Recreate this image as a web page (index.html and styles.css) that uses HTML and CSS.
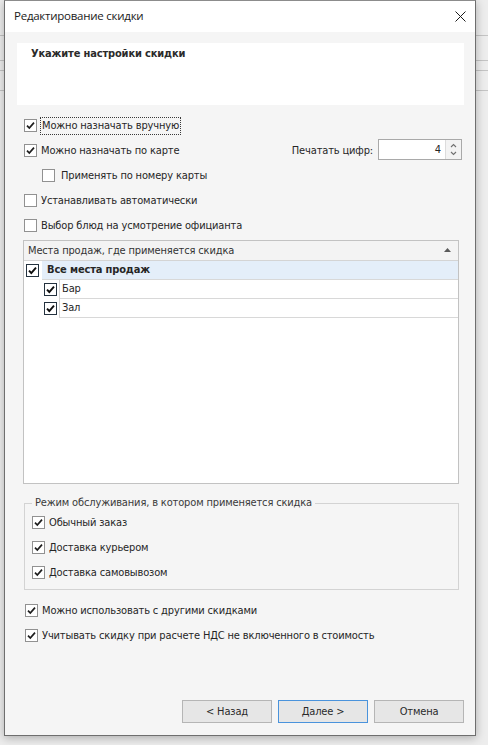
FILE: index.html
```html
<!DOCTYPE html>
<html lang="ru">
<head>
<meta charset="utf-8">
<title>Редактирование скидки</title>
<link rel="stylesheet" href="styles.css">
</head>
<body>
<div class="window">
  <div class="titlebar">
    <span class="title">Редактирование скидки</span>
    <svg class="close" viewBox="0 0 11 11" width="11" height="11"><path d="M0.5 0.5 L10.5 10.5 M10.5 0.5 L0.5 10.5" stroke="#1b1b1b" stroke-width="1" fill="none"/></svg>
  </div>
  <div class="content">
    <div class="banner"><span class="banner-text">Укажите настройки скидки</span></div>

    <div class="options">
      <div class="row">
        <span class="cb"><svg viewBox="0 0 11 11"><path d="M2 5.6 L4.3 8 L9 2.6" /></svg></span>
        <span class="focus">Можно назначать вручную</span>
      </div>
      <div class="row">
        <span class="cb"><svg viewBox="0 0 11 11"><path d="M2 5.6 L4.3 8 L9 2.6" /></svg></span>
        <span class="lbl">Можно назначать по карте</span>
        <div class="digits">
          <span class="digits-lbl">Печатать цифр:</span>
          <div class="spin">
            <span class="spin-val">4</span>
            <span class="spin-btns">
              <svg viewBox="0 0 7 5" width="7" height="5"><path d="M1 4 L3.5 1.5 L6 4" /></svg>
              <svg viewBox="0 0 7 5" width="7" height="5"><path d="M1 1 L3.5 3.5 L6 1" /></svg>
            </span>
          </div>
        </div>
      </div>
      <div class="row sub">
        <span class="cb"></span>
        <span class="lbl">Применять по номеру карты</span>
      </div>
      <div class="row">
        <span class="cb"></span>
        <span class="lbl">Устанавливать автоматически</span>
      </div>
      <div class="row">
        <span class="cb"></span>
        <span class="lbl">Выбор блюд на усмотрение официанта</span>
      </div>
    </div>

    <div class="grid">
      <div class="grid-head">
        <span>Места продаж, где применяется скидка</span>
        <svg class="sort" viewBox="0 0 7 4" width="7" height="4"><path d="M0 4 L3.5 0 L7 4 Z" fill="#5a5a5a"/></svg>
      </div>
      <div class="node root">
        <span class="node-check"><span class="cb dark"><svg viewBox="0 0 11 11"><path d="M2 5.6 L4.3 8 L9 2.6" /></svg></span></span>
        <span class="node-text selected">Все места продаж</span>
      </div>
      <div class="node">
        <span class="node-indent"></span>
        <span class="node-check child"><span class="cb dark"><svg viewBox="0 0 11 11"><path d="M2 5.6 L4.3 8 L9 2.6" /></svg></span></span>
        <span class="node-text">Бар</span>
      </div>
      <div class="node">
        <span class="node-indent"></span>
        <span class="node-check child"><span class="cb dark"><svg viewBox="0 0 11 11"><path d="M2 5.6 L4.3 8 L9 2.6" /></svg></span></span>
        <span class="node-text">Зал</span>
      </div>
    </div>

    <fieldset class="group">
      <legend>Режим обслуживания, в котором применяется скидка</legend>
      <div class="row">
        <span class="cb"><svg viewBox="0 0 11 11"><path d="M2 5.6 L4.3 8 L9 2.6" /></svg></span>
        <span class="lbl">Обычный заказ</span>
      </div>
      <div class="row">
        <span class="cb"><svg viewBox="0 0 11 11"><path d="M2 5.6 L4.3 8 L9 2.6" /></svg></span>
        <span class="lbl">Доставка курьером</span>
      </div>
      <div class="row">
        <span class="cb"><svg viewBox="0 0 11 11"><path d="M2 5.6 L4.3 8 L9 2.6" /></svg></span>
        <span class="lbl">Доставка самовывозом</span>
      </div>
    </fieldset>

    <div class="options tail">
      <div class="row">
        <span class="cb"><svg viewBox="0 0 11 11"><path d="M2 5.6 L4.3 8 L9 2.6" /></svg></span>
        <span class="lbl">Можно использовать с другими скидками</span>
      </div>
      <div class="row">
        <span class="cb"><svg viewBox="0 0 11 11"><path d="M2 5.6 L4.3 8 L9 2.6" /></svg></span>
        <span class="lbl">Учитывать скидку при расчете НДС не включенного в стоимость</span>
      </div>
    </div>

    <div class="buttons">
      <button class="btn">&lt; Назад</button>
      <button class="btn default">Далее &gt;</button>
      <button class="btn">Отмена</button>
    </div>
  </div>
</div>
</body>
</html>
```

FILE: styles.css
```css
html, body {
  margin: 0;
  padding: 0;
}

body {
  width: 488px;
  height: 745px;
  overflow: hidden;
  background-color: #ededed;
  background-image:
    linear-gradient(#c4c4c4, #c4c4c4),
    linear-gradient(#c4c4c4, #c4c4c4),
    linear-gradient(#c4c4c4, #c4c4c4),
    linear-gradient(#c4c4c4, #c4c4c4);
  background-size: 100% 1px;
  background-position: 0 35px, 0 60px, 0 70px, 0 90px;
  background-repeat: no-repeat;
  font-family: "DejaVu Sans Condensed", "Liberation Sans", sans-serif;
  font-size: 11px;
  letter-spacing: -0.15px;
  color: #262626;
}

/* dialog frame */
.window {
  box-sizing: border-box;
  margin-left: 4px;
  width: 472px;
  height: 736px;
  border: 1px solid #6e6e6e;
  border-top-color: #8c8c8c;
  background: #f5f5f5;
  box-shadow: 0 2px 9px rgba(0, 0, 0, 0.28);
  display: flex;
  flex-direction: column;
}

.titlebar {
  height: 31px;
  flex: none;
  background: #fff;
  display: flex;
  align-items: center;
  justify-content: space-between;
  padding: 0 9px 0 9px;
}

.title {
  font-family: "Open Sans", "Noto Sans", sans-serif;
  font-size: 11.5px;
  letter-spacing: -0.25px;
  color: #1a1a1a;
  margin-top: -2px;
}

.close {
  display: block;
  margin-top: -1px;
}

.content {
  flex: 1;
  display: flex;
  flex-direction: column;
  padding: 11px 11px 12px 12px;
}

/* white wizard banner */
.banner {
  height: 62px;
  background: #fff;
  padding: 4px 14px 0;
  box-sizing: border-box;
}

.banner-text {
  font-weight: bold;
  color: #2b2b2b;
}

/* checkbox rows */
.options {
  margin-top: 8px;
  padding-left: 7px;
}

.options.tail {
  margin-top: 8px;
  padding-left: 8px;
}

.row {
  height: 25px;
  display: flex;
  align-items: center;
}

.row.sub {
  padding-left: 18px;
}

.row.sub .lbl {
  margin-left: 6px;
}

.cb {
  box-sizing: border-box;
  width: 13px;
  height: 13px;
  flex: none;
  border: 1px solid #919191;
  background: #fff;
  display: inline-flex;
  align-items: center;
  justify-content: center;
}

.cb svg {
  width: 11px;
  height: 11px;
  fill: none;
  stroke: #1d1d1d;
  stroke-width: 1.7;
}

.cb.dark {
  border-color: #24323f;
}

.cb.dark svg {
  stroke: #0d0d0d;
  stroke-width: 1.9;
}

.lbl {
  margin-left: 4px;
  white-space: nowrap;
}

.focus {
  margin-left: 3px;
  padding: 1px 1px 1px 1px;
  border: 1px dotted #3a3a3a;
  line-height: 14px;
  white-space: nowrap;
}

/* digits spinner */
.digits {
  margin-left: auto;
  margin-right: 2px;
  display: flex;
  align-items: center;
}

.digits-lbl {
  margin-right: 5px;
}

.spin {
  box-sizing: border-box;
  width: 84px;
  height: 21px;
  border: 1px solid #a9a9a9;
  background: #fff;
  display: flex;
  margin-bottom: 2px;
}

.spin-val {
  flex: 1;
  text-align: right;
  padding-right: 4px;
  line-height: 19px;
}

.spin-btns {
  width: 15px;
  border-left: 1px solid #dcdcdc;
  background: #f3f3f3;
  display: flex;
  flex-direction: column;
  align-items: center;
  justify-content: center;
  gap: 3px;
}

.spin-btns svg {
  fill: none;
  stroke: #707070;
  stroke-width: 1.1;
}

/* places tree list */
.grid {
  box-sizing: border-box;
  margin: 2px 5px 0 6px;
  height: 244px;
  border: 1px solid #c2c2c2;
  background: #fff;
}

.grid-head {
  height: 19px;
  border-bottom: 1px solid #d4d4d4;
  background: #f3f3f3;
  display: flex;
  align-items: center;
  justify-content: space-between;
  padding: 0 7px 0 4px;
  color: #333;
}

.sort {
  margin-top: -1px;
}

.node {
  height: 19px;
  display: flex;
}

.node-indent {
  width: 18px;
  flex: none;
}

.node-check {
  width: 18px;
  flex: none;
  display: flex;
  align-items: center;
  padding-left: 2px;
  box-sizing: border-box;
}

.node-check.child {
  border-right: 1px solid #d4d4d4;
}

.node-text {
  flex: 1;
  border-bottom: 1px solid #d8d8d8;
  line-height: 18px;
  padding-left: 2px;
}

.node-text.selected {
  background: #e4eef9;
  font-weight: bold;
  padding-left: 5px;
}

/* service mode group */
.group {
  margin: 12px 5px 0 7px;
  padding: 0 0 4px 7px;
  border: 1px solid #d3d3d3;
  min-width: 0;
}

.group legend {
  padding: 0 3px;
  line-height: 14px;
  color: #3a3a3a;
}

/* wizard buttons */
.buttons {
  margin-top: auto;
  display: flex;
  justify-content: flex-end;
  gap: 6px;
}

.btn {
  box-sizing: border-box;
  width: 90px;
  height: 23px;
  border: 1px solid #b5b5b5;
  background: #e6e6e6;
  font-family: "DejaVu Sans Condensed", "Liberation Sans", sans-serif;
  font-size: 11px;
  letter-spacing: -0.15px;
  color: #2a2a2a;
  padding: 0;
}

.btn.default {
  border-color: #4a93dc;
}
```
